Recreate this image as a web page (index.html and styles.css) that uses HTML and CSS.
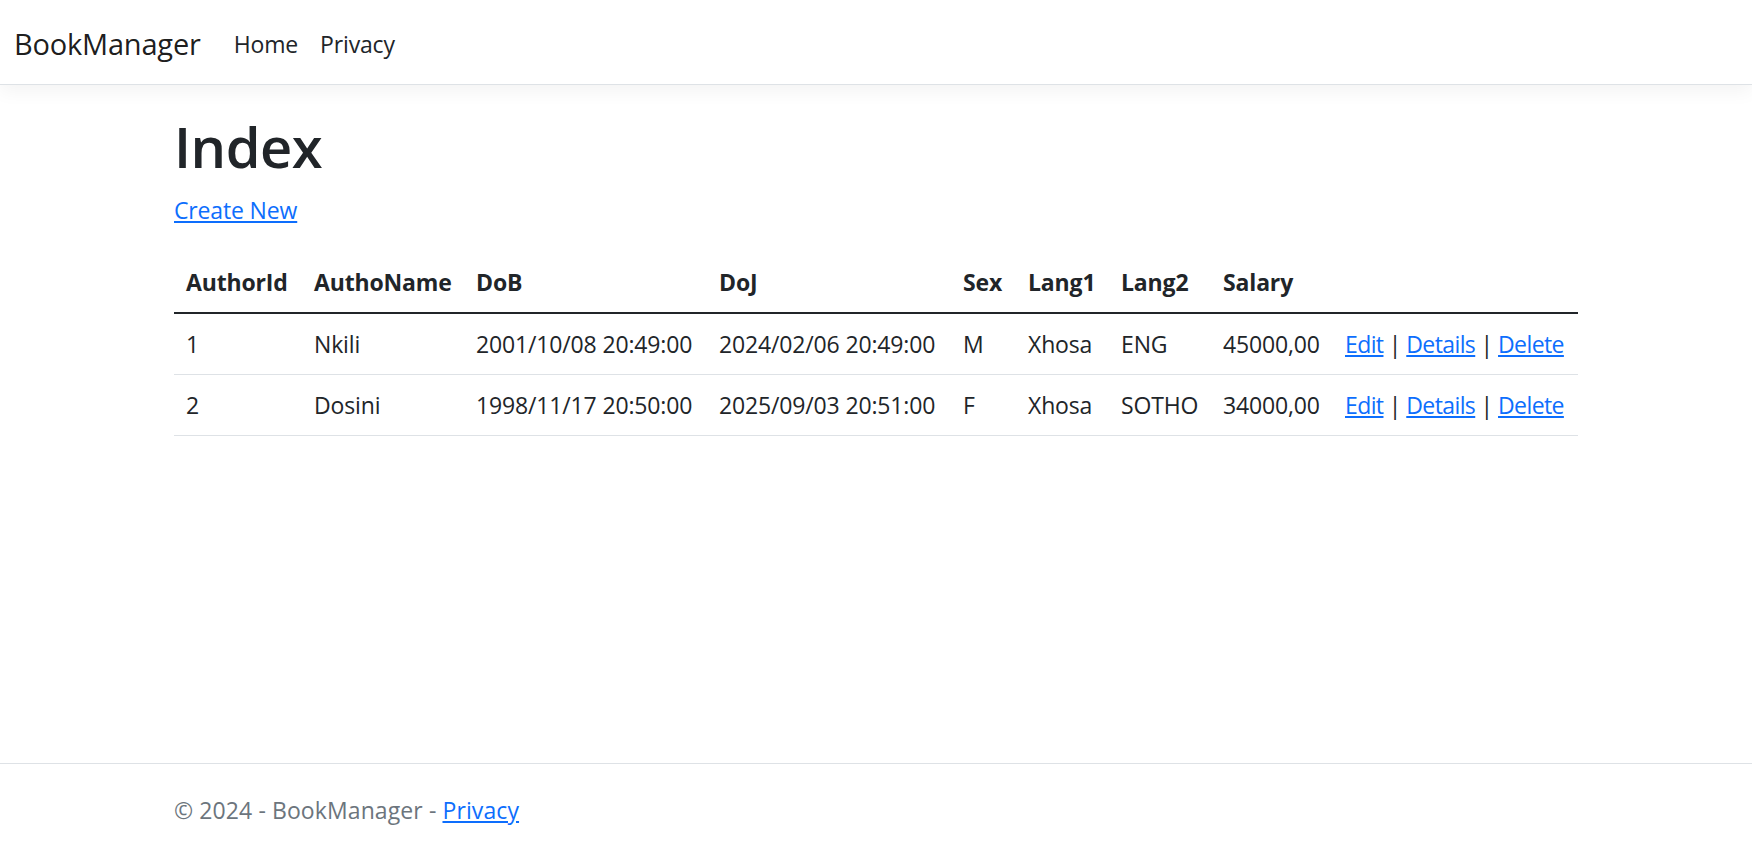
FILE: index.html
```html
<!DOCTYPE html>
<html lang="en">
<head>
<meta charset="utf-8">
<title>Index - BookManager</title>
<link rel="stylesheet" href="styles.css">
</head>
<body>
<header>
  <nav class="navbar">
    <a class="brand" href="#">BookManager</a>
    <ul class="nav">
      <li><a class="nav-link" href="#">Home</a></li>
      <li><a class="nav-link" href="#">Privacy</a></li>
    </ul>
  </nav>
</header>
<div class="container">
  <main class="main">
    <h1 class="title">Index</h1>
    <p class="create"><a class="link" href="#">Create New</a></p>
    <table class="table">
      <colgroup>
        <col class="c-id"><col class="c-name"><col class="c-dob"><col class="c-doj"><col class="c-sex"><col class="c-l1"><col class="c-l2"><col class="c-sal"><col class="c-act">
      </colgroup>
      <thead>
        <tr>
          <th>AuthorId</th>
          <th>AuthoName</th>
          <th>DoB</th>
          <th>DoJ</th>
          <th>Sex</th>
          <th>Lang1</th>
          <th>Lang2</th>
          <th>Salary</th>
          <th></th>
        </tr>
      </thead>
      <tbody>
        <tr>
          <td>1</td>
          <td>Nkili</td>
          <td>2001/10/08 20:49:00</td>
          <td>2024/02/06 20:49:00</td>
          <td>M</td>
          <td>Xhosa</td>
          <td>ENG</td>
          <td>45000,00</td>
          <td class="actions"><a class="link" href="#">Edit</a> | <a class="link" href="#">Details</a> | <a class="link" href="#">Delete</a></td>
        </tr>
        <tr>
          <td>2</td>
          <td>Dosini</td>
          <td>1998/11/17 20:50:00</td>
          <td>2025/09/03 20:51:00</td>
          <td>F</td>
          <td>Xhosa</td>
          <td>SOTHO</td>
          <td>34000,00</td>
          <td class="actions"><a class="link" href="#">Edit</a> | <a class="link" href="#">Details</a> | <a class="link" href="#">Delete</a></td>
        </tr>
      </tbody>
    </table>
  </main>
</div>
<footer class="footer">
  <div class="container footer-inner">&copy; 2024 - BookManager - <a class="link" href="#">Privacy</a></div>
</footer>
</body>
</html>
```

FILE: styles.css
```css
* { box-sizing: border-box; }
html, body { margin: 0; padding: 0; }
body {
  font-family: "Segoe UI", "Open Sans", "Noto Sans", sans-serif;
  font-size: 23px;
  letter-spacing: -0.15px;
  line-height: 36px;
  color: #212529;
  background: #fff;
  min-height: 100vh;
  display: flex;
  flex-direction: column;
}
.navbar {
  height: 85px;
  display: flex;
  align-items: center;
  padding: 3px 14px 0;
  background: #fff;
  border-bottom: 1px solid #dee2e6;
  box-shadow: 0 6px 18px rgba(0,0,0,.05);
  margin-bottom: 24px;
}
.brand {
  font-size: 29px;
  letter-spacing: -0.2px;
  line-height: 45px;
  color: rgba(0,0,0,.9);
  text-decoration: none;
  margin-right: 22px;
}
.nav {
  list-style: none;
  margin: 0;
  padding: 0;
  display: flex;
}
.nav-link {
  display: block;
  padding: 12px 11px;
  color: #212529;
  text-decoration: none;
}
.container {
  width: 1440px;
  margin: 0 auto;
  padding: 0 18px;
}
.title {
  font-size: 56px;
  letter-spacing: -0.5px;
  line-height: 71px;
  font-weight: 600;
  margin: 2px 0 10px;
}
.create { margin: 0 0 24px; }
.link { color: #0d6efd; text-decoration: underline; }
.table {
  width: 100%;
  border-collapse: collapse;
  table-layout: fixed;
}
.table th, .table td {
  padding: 12px 12px;
  text-align: left;
  vertical-align: top;
  white-space: nowrap;
  border-bottom: 1px solid #dee2e6;
}
.table th { font-weight: 700; }
.table thead th { border-bottom: 0; }
.table tbody tr:first-child td { border-top: 2px solid #212529; }
.table td.actions { letter-spacing: -0.6px; }
.c-id { width: 128px; }
.c-name { width: 162px; }
.c-dob { width: 243px; }
.c-doj { width: 244px; }
.c-sex { width: 65px; }
.c-l1 { width: 93px; }
.c-l2 { width: 102px; }
.c-sal { width: 122px; }
.c-act { width: 245px; }
.footer {
  margin-top: auto;
  border-top: 1px solid #dee2e6;
  color: #6c757d;
  height: 86px;
  line-height: 92px;
  letter-spacing: 0.1px;
  white-space: nowrap;
}
```
